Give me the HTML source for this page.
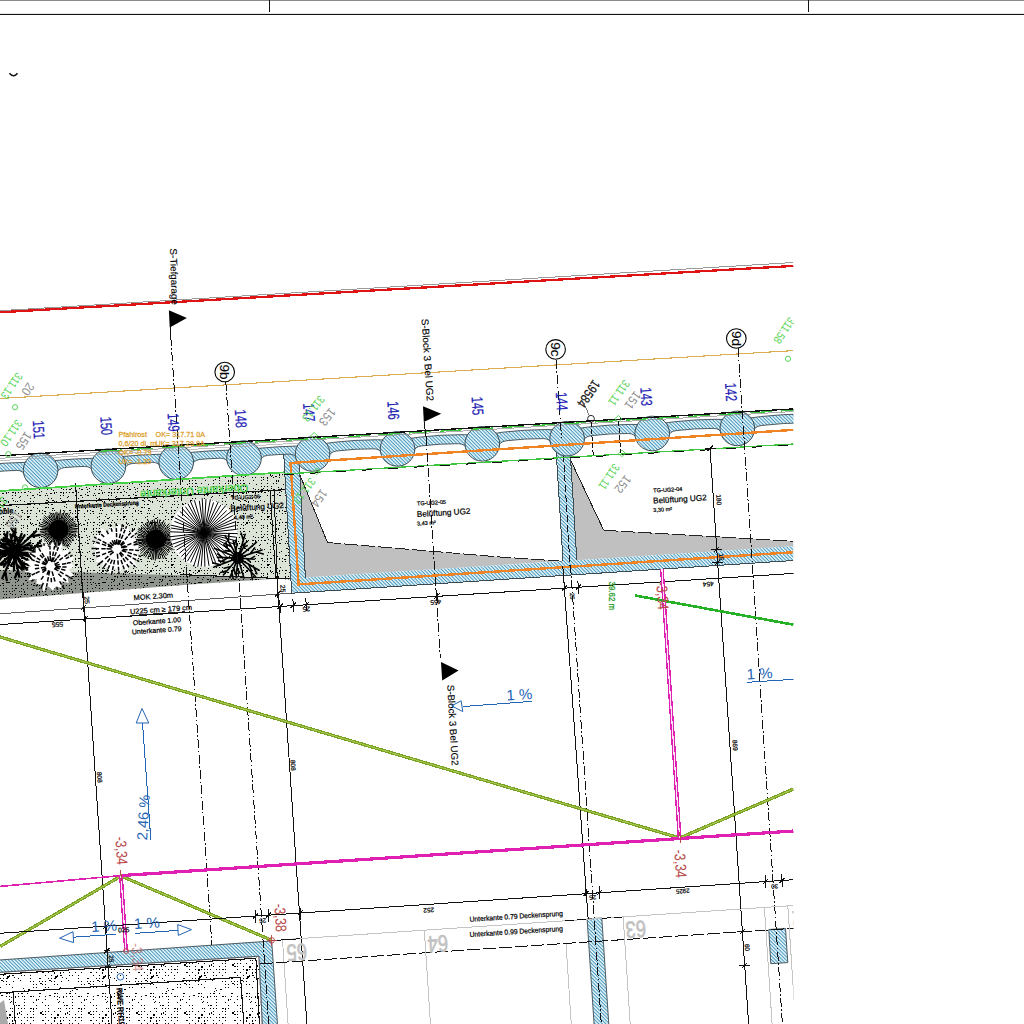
<!DOCTYPE html>
<html><head><meta charset="utf-8"><title>Plan</title>
<style>
html,body{margin:0;padding:0;background:#fff;}
body{width:1024px;height:1024px;overflow:hidden;position:relative;font-family:"Liberation Sans",sans-serif;}
svg{position:absolute;left:0;top:0;display:block;}
svg text{font-family:"Liberation Sans",sans-serif;}
</style></head><body>
<svg width="1024" height="1024" viewBox="0 0 1024 1024">
<defs>
<pattern id="h" width="2.5" height="2.5" patternUnits="userSpaceOnUse" patternTransform="rotate(45)"><rect width="2.5" height="2.5" fill="#eefafc"/><rect width="2.5" height="1.05" fill="#4496bd"/></pattern>
<pattern id="st1" width="48" height="48" patternUnits="userSpaceOnUse"><rect width="48" height="48" fill="#dae3d6"/><path d="M0 0h1v1h-1zM3 0h1v1h-1zM13 0h1v1h-1zM21 0h1v1h-1zM23 47h1v1h-1zM27 0h1v1h-1zM36 0h1v2h-1zM38 0h1v2h-1zM45 0h1v2h-1zM0 3h1v1h-1zM3 3h2v1h-2zM9 3h1v1h-1zM16 4h1v1h-1zM21 3h1v1h-1zM27 3h1v1h-1zM33 3h1v1h-1zM36 3h1v1h-1zM43 4h1v1h-1zM45 3h1v1h-1zM0 6h1v1h-1zM3 6h1v1h-1zM5 6h1v1h-1zM21 6h1v1h-1zM24 6h1v1h-1zM27 6h1v1h-1zM31 6h1v1h-1zM38 7h1v1h-1zM45 6h1v1h-1zM47 9h1v1h-1zM3 9h1v1h-1zM5 10h1v1h-1zM13 8h1v1h-1zM15 9h1v1h-1zM18 9h1v1h-1zM21 9h2v1h-2zM23 8h1v1h-1zM27 9h1v1h-1zM31 8h1v1h-1zM33 9h2v1h-2zM39 9h1v1h-1zM41 8h1v1h-1zM2 13h2v1h-2zM6 12h1v2h-1zM8 12h1v1h-1zM12 12h2v1h-2zM15 12h1v2h-1zM18 12h1v1h-1zM21 12h1v1h-1zM24 12h2v1h-2zM28 11h1v1h-1zM30 12h1v1h-1zM39 12h1v1h-1zM41 11h1v1h-1zM46 13h1v1h-1zM47 15h1v1h-1zM12 15h1v1h-1zM15 15h1v1h-1zM20 16h1v1h-1zM27 15h1v1h-1zM32 15h2v1h-2zM37 14h1v1h-1zM39 15h2v1h-2zM45 15h1v1h-1zM0 18h1v1h-1zM3 18h1v1h-1zM12 18h1v1h-1zM19 17h1v1h-1zM30 18h1v1h-1zM34 17h1v1h-1zM0 21h1v1h-1zM4 20h2v1h-2zM6 21h1v1h-1zM8 21h1v2h-1zM13 20h1v1h-1zM15 21h1v1h-1zM17 21h1v1h-1zM20 20h1v1h-1zM24 21h1v1h-1zM30 21h1v1h-1zM33 21h1v1h-1zM46 20h2v1h-2zM0 24h1v1h-1zM3 24h2v1h-2zM18 24h1v1h-1zM28 24h1v1h-1zM30 24h1v1h-1zM34 24h1v1h-1zM39 24h1v1h-1zM41 23h1v1h-1zM0 27h1v1h-1zM4 28h2v1h-2zM16 26h1v1h-1zM18 27h1v1h-1zM27 27h1v1h-1zM33 27h1v1h-1zM37 28h1v1h-1zM45 27h2v1h-2zM4 30h1v1h-1zM6 30h1v1h-1zM15 30h1v1h-1zM21 30h2v1h-2zM27 30h1v2h-1zM30 30h2v1h-2zM39 30h1v2h-1zM42 30h1v1h-1zM44 31h2v1h-2zM3 33h1v1h-1zM5 33h1v1h-1zM10 34h1v1h-1zM15 33h1v1h-1zM18 33h1v1h-1zM22 32h1v1h-1zM24 33h1v1h-1zM27 33h1v1h-1zM30 33h1v1h-1zM36 33h1v1h-1zM42 33h1v1h-1zM45 33h1v1h-1zM1 37h1v1h-1zM3 36h1v1h-1zM9 36h1v1h-1zM13 37h1v1h-1zM21 36h1v1h-1zM27 36h2v2h-2zM29 36h1v1h-1zM36 36h1v1h-1zM3 39h1v1h-1zM8 40h1v1h-1zM11 38h2v1h-2zM16 40h1v1h-1zM21 39h1v1h-1zM24 39h1v1h-1zM27 39h1v1h-1zM30 39h1v1h-1zM37 40h1v1h-1zM40 39h1v1h-1zM3 42h1v1h-1zM6 42h2v2h-2zM9 42h1v1h-1zM12 42h1v1h-1zM15 42h1v1h-1zM18 42h1v1h-1zM30 42h1v2h-1zM32 43h1v1h-1zM39 42h1v2h-1zM42 42h1v1h-1zM45 42h2v1h-2zM1 44h1v1h-1zM3 45h1v1h-1zM5 44h1v1h-1zM12 45h1v1h-1zM15 45h1v1h-1zM21 45h1v1h-1zM23 45h1v1h-1zM27 45h1v2h-1zM31 44h1v1h-1zM33 45h1v1h-1zM35 44h2v1h-2zM39 45h1v1h-1zM45 45h1v1h-1z" fill="#000" shape-rendering="crispEdges"/></pattern>
<pattern id="st2" width="48" height="48" patternUnits="userSpaceOnUse"><rect width="48" height="48" fill="#8f948c"/><path d="M5 1h2v1h-2zM11 1h1v1h-1zM18 0h2v1h-2zM21 0h1v2h-1zM24 0h2v1h-2zM27 0h2v1h-2zM30 0h1v1h-1zM32 0h1v1h-1zM36 0h1v1h-1zM39 0h1v1h-1zM42 0h2v1h-2zM45 0h1v1h-1zM3 3h1v1h-1zM10 3h1v1h-1zM15 3h2v1h-2zM18 3h1v2h-1zM25 4h2v1h-2zM30 3h1v1h-1zM33 3h2v1h-2zM36 3h1v1h-1zM39 3h1v1h-1zM42 3h2v1h-2zM47 7h1v1h-1zM2 7h2v1h-2zM6 6h2v1h-2zM8 6h2v1h-2zM15 6h1v1h-1zM17 5h1v1h-1zM23 7h1v1h-1zM27 6h1v1h-1zM34 7h1v1h-1zM39 6h1v1h-1zM42 6h1v1h-1zM45 6h1v1h-1zM0 9h1v1h-1zM3 9h1v1h-1zM12 9h1v1h-1zM15 9h1v1h-1zM18 9h1v1h-1zM21 9h1v1h-1zM23 8h1v1h-1zM27 9h1v1h-1zM31 8h1v1h-1zM33 9h2v1h-2zM39 9h1v1h-1zM43 8h1v1h-1zM47 11h1v1h-1zM3 12h1v1h-1zM6 12h1v1h-1zM12 12h1v1h-1zM15 12h2v1h-2zM21 12h1v1h-1zM23 13h1v1h-1zM27 12h1v1h-1zM32 13h2v1h-2zM39 12h1v1h-1zM44 12h1v1h-1zM3 15h1v1h-1zM6 15h1v1h-1zM9 15h1v1h-1zM12 15h1v1h-1zM14 14h1v1h-1zM19 15h1v1h-1zM21 15h1v1h-1zM24 15h1v2h-1zM37 16h1v1h-1zM39 15h1v2h-1zM42 15h1v1h-1zM45 15h1v1h-1zM47 19h2v2h-2zM4 18h1v1h-1zM6 18h1v1h-1zM10 17h1v1h-1zM12 18h1v1h-1zM15 18h1v1h-1zM21 18h1v1h-1zM24 18h2v1h-2zM27 18h1v1h-1zM31 19h1v1h-1zM33 18h1v1h-1zM36 18h1v2h-1zM39 18h1v1h-1zM43 19h1v2h-1zM45 18h2v1h-2zM47 20h1v1h-1zM3 21h1v1h-1zM6 21h1v1h-1zM9 21h1v1h-1zM15 21h1v1h-1zM18 21h1v1h-1zM20 20h1v1h-1zM27 21h1v1h-1zM30 21h1v2h-1zM33 21h1v1h-1zM40 21h1v1h-1zM1 24h1v1h-1zM4 23h1v1h-1zM6 24h1v1h-1zM12 24h1v1h-1zM15 24h1v1h-1zM21 24h1v1h-1zM24 24h2v1h-2zM27 24h1v1h-1zM30 24h1v1h-1zM32 24h1v1h-1zM35 23h1v1h-1zM45 24h1v1h-1zM0 27h2v1h-2zM4 28h1v1h-1zM5 27h1v1h-1zM9 27h1v1h-1zM15 27h1v1h-1zM18 27h1v1h-1zM27 27h1v2h-1zM0 30h1v1h-1zM3 30h1v1h-1zM9 30h2v1h-2zM12 30h1v1h-1zM15 30h1v1h-1zM27 30h1v1h-1zM32 30h1v1h-1zM38 30h1v1h-1zM43 29h1v1h-1zM45 30h1v1h-1zM0 33h1v1h-1zM3 33h1v1h-1zM9 33h2v1h-2zM12 33h1v1h-1zM15 33h1v1h-1zM18 33h1v1h-1zM24 33h1v1h-1zM36 33h1v1h-1zM38 32h1v2h-1zM42 33h1v1h-1zM45 33h1v1h-1zM0 36h1v1h-1zM3 36h1v1h-1zM10 35h1v1h-1zM11 35h1v1h-1zM21 36h2v1h-2zM24 36h1v1h-1zM26 35h1v1h-1zM31 37h1v1h-1zM36 36h2v1h-2zM39 36h1v1h-1zM41 36h1v1h-1zM44 37h1v1h-1zM0 39h1v1h-1zM3 39h1v1h-1zM5 38h1v1h-1zM9 39h1v1h-1zM17 38h1v1h-1zM20 38h1v1h-1zM23 40h2v1h-2zM26 38h2v1h-2zM33 39h1v1h-1zM36 39h1v1h-1zM39 39h1v1h-1zM45 39h1v1h-1zM0 42h1v1h-1zM3 42h1v1h-1zM9 42h1v1h-1zM13 43h1v1h-1zM15 42h1v1h-1zM18 42h1v1h-1zM21 42h2v1h-2zM24 42h1v1h-1zM29 43h2v1h-2zM32 41h2v2h-2zM36 42h1v1h-1zM39 42h1v1h-1zM42 42h1v1h-1zM44 43h1v1h-1zM3 45h1v1h-1zM6 45h1v1h-1zM9 45h2v1h-2zM15 45h1v2h-1zM18 45h1v1h-1zM21 45h1v1h-1zM25 45h1v1h-1zM27 45h1v2h-1zM29 46h1v1h-1zM36 45h1v1h-1zM39 45h1v1h-1zM42 45h1v1h-1z" fill="#000" shape-rendering="crispEdges"/></pattern>
<pattern id="st3" width="48" height="48" patternUnits="userSpaceOnUse"><rect width="48" height="48" fill="#ffffff"/><path d="M0 0h1v1h-1zM10 0h1v1h-1zM12 0h1v1h-1zM18 0h1v1h-1zM21 0h1v1h-1zM24 0h1v1h-1zM30 0h2v1h-2zM33 0h1v2h-1zM36 0h1v1h-1zM0 3h1v1h-1zM6 3h1v1h-1zM12 3h1v1h-1zM19 4h1v2h-1zM21 3h1v1h-1zM30 3h1v1h-1zM33 3h1v1h-1zM40 4h2v2h-2zM42 3h1v1h-1zM45 3h1v1h-1zM3 6h1v1h-1zM9 6h2v2h-2zM17 5h1v2h-1zM21 6h1v1h-1zM27 6h1v1h-1zM33 6h1v1h-1zM42 6h2v1h-2zM45 6h1v1h-1zM3 9h1v1h-1zM6 9h2v2h-2zM9 9h1v1h-1zM12 9h1v1h-1zM15 9h1v1h-1zM18 9h1v1h-1zM24 9h1v1h-1zM27 9h1v1h-1zM30 9h2v1h-2zM33 9h1v1h-1zM45 9h1v1h-1zM0 12h1v1h-1zM6 12h1v2h-1zM12 12h1v2h-1zM15 12h1v1h-1zM21 12h1v1h-1zM27 12h1v1h-1zM33 12h1v1h-1zM42 12h2v1h-2zM3 15h1v1h-1zM7 16h2v2h-2zM9 15h1v2h-1zM12 15h2v1h-2zM21 15h1v1h-1zM24 15h1v1h-1zM30 15h1v1h-1zM45 15h1v1h-1zM0 18h1v1h-1zM3 18h1v1h-1zM6 18h2v1h-2zM14 17h1v1h-1zM18 18h1v1h-1zM30 18h1v1h-1zM39 18h2v1h-2zM1 20h2v1h-2zM3 21h1v1h-1zM6 21h1v1h-1zM13 21h1v1h-1zM20 20h1v1h-1zM30 21h1v1h-1zM33 21h1v1h-1zM39 21h1v1h-1zM42 21h1v1h-1zM45 21h1v1h-1zM6 24h1v1h-1zM9 24h1v1h-1zM33 24h1v1h-1zM36 24h1v1h-1zM40 23h2v1h-2zM42 24h1v1h-1zM45 24h1v1h-1zM0 27h1v1h-1zM12 27h1v1h-1zM23 28h1v1h-1zM33 27h1v1h-1zM36 27h1v1h-1zM45 27h1v1h-1zM22 31h1v1h-1zM24 30h1v1h-1zM28 29h2v1h-2zM6 33h2v1h-2zM9 33h1v1h-1zM18 33h1v1h-1zM21 33h2v1h-2zM27 33h1v1h-1zM39 33h2v1h-2zM1 35h2v1h-2zM6 36h1v1h-1zM9 36h1v1h-1zM11 37h1v1h-1zM15 36h1v2h-1zM18 36h1v1h-1zM22 36h1v1h-1zM24 36h1v1h-1zM30 36h2v1h-2zM33 36h1v1h-1zM39 36h1v1h-1zM45 36h1v1h-1zM9 39h1v1h-1zM24 39h1v1h-1zM36 39h1v2h-1zM38 39h1v1h-1zM45 39h1v1h-1zM10 42h1v1h-1zM11 41h1v1h-1zM15 42h1v1h-1zM24 42h1v1h-1zM33 42h1v1h-1zM42 42h1v1h-1zM0 45h1v1h-1zM16 45h1v1h-1zM18 45h2v1h-2zM24 45h1v1h-1zM36 45h1v1h-1zM45 45h1v1h-1z" fill="#000" shape-rendering="crispEdges"/></pattern>
<clipPath id="clip"><rect x="0" y="15" width="793.5" height="1010"/></clipPath>
</defs>
<rect x="0" y="0" width="1024" height="1" fill="#8a8a8a"/>
<rect x="0" y="13.9" width="1024" height="1.1" fill="#111"/>
<rect x="269" y="0" width="1" height="12" fill="#111"/>
<rect x="808" y="0" width="1" height="12" fill="#111"/>
<path d="M9.5 73.3 q4 5 8 0" stroke="#111" stroke-width="1.6" fill="none"/>
<g clip-path="url(#clip)">
<polygon points="0.0,491.0 284.5,472.3 291.0,579.5 0.0,570.0" fill="url(#st1)" stroke="none" stroke-width="1" />
<polygon points="0.0,570.0 180.0,575.2 272.0,579.0 180.0,585.3 0.0,599.4" fill="url(#st2)" stroke="none" stroke-width="1" />
<path d="M14.0 552.0L38.8 553.8M32.6 553.3L39.0 549.6M14.0 552.0L37.2 558.9M25.6 555.5L32.5 553.3M31.4 557.2L35.9 562.8M14.0 552.0L35.0 564.8M29.7 561.6L32.8 568.3M14.0 552.0L29.5 573.1M21.8 562.5L29.2 565.1M25.6 567.8L33.0 570.4M14.0 552.0L23.7 569.2M18.8 560.6L24.2 563.2M14.0 552.0L19.3 576.7M16.6 564.4L22.1 569.6M18.0 570.6L15.1 577.6M14.0 552.0L14.0 570.2M14.0 561.1L10.9 565.6M14.0 552.0L2.3 578.3M5.2 571.7L6.8 580.2M14.0 552.0L4.1 566.4M9.0 559.2L9.0 564.4M6.6 562.8L1.7 564.7M14.0 552.0L-8.8 572.2M-3.1 567.1L-5.3 576.0M14.0 552.0L-2.5 558.6M5.7 555.3L0.5 554.1M1.6 556.9L-1.4 561.3M14.0 552.0L-6.6 554.9M3.7 553.4L-1.9 550.7M-1.5 554.2L-7.1 551.4M14.0 552.0L-4.6 549.8M4.7 550.9L-0.3 553.5M0.1 550.3L-4.1 546.6M14.0 552.0L-4.1 544.6M5.0 548.3L1.7 543.4M0.4 546.5L-5.3 547.7M14.0 552.0L-4.6 539.5M4.7 545.8L-2.0 545.8M0.0 542.7L-2.5 536.4M14.0 552.0L3.8 538.0M8.9 545.0L4.0 543.3M6.4 541.5L1.5 539.7M14.0 552.0L4.3 533.8M6.7 538.3L7.4 532.2M14.0 552.0L10.4 534.3M12.2 543.1L8.3 539.4M11.3 538.7L13.4 533.7M14.0 552.0L15.4 528.7M15.0 534.5L11.4 528.5M14.0 552.0L21.6 533.9M17.8 543.0L16.6 537.2M14.0 552.0L24.5 535.3M14.0 552.0L36.1 531.2M30.6 536.4L39.5 535.0M14.0 552.0L30.2 542.8M22.1 547.4L27.6 547.9M26.1 545.1L31.7 545.6M14.0 552.0L41.8 545.7M27.9 548.9L35.9 552.0M34.9 547.3L40.7 541.0" stroke="#000" stroke-width="2.3" fill="none" stroke-linecap="round"/>
<circle cx="14" cy="552" r="6.8" fill="#000"/>
<path d="M58.6 529.8L77.2 529.9M58.6 529.8L77.6 532.0M58.6 529.8L75.8 533.3M58.6 529.8L77.2 536.0M58.6 529.8L75.5 536.8M58.6 529.8L73.5 537.9M58.6 529.8L74.1 540.4M58.6 529.8L71.5 541.1M58.6 529.8L71.6 542.9M58.6 529.8L70.8 545.0M58.6 529.8L69.6 546.9M58.6 529.8L67.8 547.8M58.6 529.8L65.3 546.6M58.6 529.8L63.4 546.0M58.6 529.8L61.6 546.6M58.6 529.8L60.3 547.7M58.6 529.8L58.5 546.9M58.6 529.8L56.6 547.9M58.6 529.8L54.6 549.7M58.6 529.8L53.2 546.2M58.6 529.8L51.2 546.3M58.6 529.8L49.8 546.1M58.6 529.8L47.5 546.4M58.6 529.8L47.5 542.6M58.6 529.8L46.5 541.5M58.6 529.8L44.3 541.1M58.6 529.8L44.4 539.3M58.6 529.8L43.4 537.9M58.6 529.8L41.6 536.7M58.6 529.8L39.2 535.5M58.6 529.8L40.4 533.0M58.6 529.8L39.9 531.4M58.6 529.8L39.9 529.5M58.6 529.8L41.6 528.0M58.6 529.8L38.7 525.8M58.6 529.8L39.8 524.0M58.6 529.8L41.6 522.3M58.6 529.8L42.8 520.8M58.6 529.8L42.8 519.1M58.6 529.8L43.6 517.1M58.6 529.8L44.4 515.3M58.6 529.8L47.6 516.0M58.6 529.8L48.9 514.9M58.6 529.8L49.6 512.2M58.6 529.8L52.2 513.4M58.6 529.8L53.6 512.9M58.6 529.8L55.6 512.5M58.6 529.8L56.9 511.8M58.6 529.8L59.0 512.8M58.6 529.8L60.6 509.5M58.6 529.8L62.4 513.0M58.6 529.8L64.7 510.5M58.6 529.8L66.0 513.1M58.6 529.8L68.0 512.9M58.6 529.8L70.0 513.5M58.6 529.8L70.3 516.1M58.6 529.8L71.5 517.5M58.6 529.8L73.7 517.8M58.6 529.8L73.7 519.9M58.6 529.8L75.4 521.2M58.6 529.8L75.6 523.1M58.6 529.8L77.4 524.2M58.6 529.8L77.9 526.1M58.6 529.8L79.0 528.3" stroke="#000" stroke-width="1.0" fill="none"/>
<circle cx="58.6" cy="529.8" r="9.8" fill="#000"/>
<polygon points="74.2,566.4 68.8,569.8 74.0,575.5 67.6,577.0 68.7,583.0 61.7,581.2 61.2,587.9 56.1,586.2 52.7,590.5 48.6,586.6 43.4,591.5 41.7,584.1 36.4,585.0 36.5,579.2 28.3,580.2 32.0,573.6 24.2,571.3 30.8,566.4 24.0,561.4 33.0,559.6 28.0,552.5 35.5,552.8 36.0,547.2 41.8,549.0 43.2,540.8 48.7,547.1 52.8,541.6 55.7,548.2 62.3,542.6 61.6,551.7 69.2,549.4 67.6,555.8 73.9,557.3 70.7,562.6" fill="#fff" stroke="none" stroke-width="1" />
<path d="M56.0 566.6L60.9 566.8M62.3 566.9L66.6 567.1M55.1 567.6L59.8 568.8M61.2 569.2L65.4 570.3M54.2 568.5L58.4 570.9M59.8 571.7L63.6 573.8M65.4 574.9L68.7 576.7M70.3 577.6L72.6 578.9M58.3 573.7L61.5 576.7M63.3 578.4L66.1 580.9M59.6 581.4L61.6 584.6M62.3 585.7L63.7 588.0M52.0 571.4L53.4 576.0M53.8 577.3L55.0 581.5M56.8 587.2L57.5 589.8M51.2 578.0L51.4 582.3M49.7 570.7L48.7 575.5M48.4 577.2L47.5 581.5M47.2 583.2L46.5 586.9M46.4 587.5L45.8 590.1M48.8 570.3L46.9 574.8M43.4 582.9L41.9 586.3M41.9 586.2L40.9 588.7M43.5 576.1L41.0 579.6M37.8 584.1L36.2 586.3M46.3 569.7L42.4 572.7M33.5 579.7L31.4 581.4M46.4 568.3L42.0 570.3M39.6 571.4L35.7 573.2M35.2 573.4L31.8 575.0M30.7 575.6L28.2 576.7M45.7 567.1L40.9 567.9M39.2 568.2L34.9 568.8M28.3 569.8L25.7 570.3M39.0 565.4L34.7 565.1M28.4 564.5L25.7 564.3M46.3 564.9L41.7 563.2M39.8 562.5L35.7 561.1M34.7 560.7L31.2 559.4M46.7 564.1L42.6 561.5M40.4 560.1L36.8 557.8M35.5 557.0L32.3 555.0M32.2 554.9L29.9 553.5M47.6 563.2L44.3 559.6M42.9 558.1L40.0 554.9M35.4 549.8L33.6 547.8M47.6 562.0L45.0 557.9M44.2 556.8L41.9 553.2M40.8 551.6L38.7 548.4M38.2 547.6L36.7 545.4M48.9 561.1L47.6 556.4M44.4 545.8L43.7 543.2M50.3 561.0L50.2 556.1M50.2 555.5L50.1 551.2M50.0 549.6L49.9 545.8M49.9 544.6L49.8 541.9M51.4 562.1L52.4 557.4M52.7 555.8L53.5 551.6M53.9 549.6L54.7 545.9M54.9 544.9L55.4 542.3M52.4 561.7L54.2 557.2M54.6 556.3L56.3 552.3M57.0 550.6L58.4 547.1M59.1 545.4L60.1 542.9M53.8 562.3L56.8 558.5M57.3 558.0L60.0 554.6M59.4 560.1L62.9 557.6M64.4 556.6L67.5 554.4M68.3 553.8L70.5 552.2M54.4 564.4L58.8 562.2M65.7 558.7L69.1 557.0M70.1 556.5L72.5 555.2M54.9 565.6L59.7 564.6M62.0 564.2L66.3 563.4M66.9 563.2L70.7 562.5" stroke="#000" stroke-width="1.5" fill="none"/>
<polygon points="144.5,549.0 137.8,552.9 139.2,557.6 133.5,559.2 137.2,567.4 128.8,564.6 127.9,570.9 122.4,568.1 119.2,573.2 115.3,567.8 110.0,573.7 108.1,567.0 102.3,568.5 102.9,561.8 95.6,562.3 98.1,556.3 93.3,553.4 98.0,549.0 92.9,544.5 98.4,541.8 95.2,535.5 101.6,535.0 101.2,528.1 108.7,532.2 110.3,525.3 115.2,529.6 119.3,524.1 122.5,529.6 128.3,526.4 129.1,532.9 136.9,530.9 133.1,539.0 140.6,539.8 137.1,545.2" fill="#fff" stroke="none" stroke-width="1" />
<path d="M122.6 549.4L127.5 549.7M129.1 549.8L133.5 550.1M135.2 550.2L139.0 550.5M121.6 550.5L126.3 552.0M127.7 552.4L131.9 553.7M133.5 554.2L137.2 555.4M138.5 555.8L141.1 556.6M127.3 554.9L131.2 557.0M132.6 557.9L136.0 559.8M136.8 560.2L139.2 561.6M120.1 552.0L123.6 555.5M125.2 557.0L128.3 560.1M129.8 561.5L132.6 564.2M133.4 565.1L135.4 567.0M119.5 552.9L122.2 557.0M123.0 558.2L125.4 561.8M126.8 564.1L128.9 567.3M121.0 560.1L122.5 564.3M122.9 565.5L124.2 569.1M124.8 570.7L125.7 573.3M117.4 553.7L117.8 558.7M117.9 560.4L118.2 564.8M118.4 566.7L118.7 570.6M118.7 571.3L119.0 574.0M114.6 560.0L113.7 564.3M113.3 566.2L112.5 570.0M112.3 570.8L111.8 573.5M112.2 559.7L110.4 563.7M109.6 565.3L108.1 568.8M107.9 569.3L106.7 571.8M110.0 558.5L107.4 562.0M106.4 563.4L104.2 566.5M104.1 566.6L102.4 568.9M113.7 551.8L109.9 554.9M108.4 556.2L105.0 559.0M103.0 560.6L100.1 563.1M99.9 563.2L97.8 564.9M112.6 550.7L107.9 552.5M106.2 553.1L102.1 554.7M100.1 555.5L96.5 556.8M99.8 552.3L96.0 553.0M95.0 553.2L92.3 553.7M111.6 548.9L106.6 548.8M105.7 548.8L101.3 548.7M99.0 548.7L95.1 548.6M94.2 548.6L91.5 548.5M112.5 547.6L107.8 546.0M106.1 545.5L101.9 544.1M99.8 543.5L96.2 542.3M95.1 541.9L92.5 541.1M112.1 546.4L107.7 544.1M106.5 543.5L102.6 541.4M101.1 540.6L97.7 538.8M96.6 538.3L94.1 537.0M113.6 545.8L109.9 542.4M104.2 537.0L101.4 534.4M100.1 533.2L98.1 531.4M114.5 544.7L112.1 540.4M108.4 534.1L106.5 530.7M115.8 544.8L114.5 540.0M112.2 531.8L111.1 528.1M110.8 526.9L110.0 524.3M116.8 544.2L116.7 539.3M116.6 537.3L116.5 532.9M116.5 532.0L116.3 528.1M116.3 526.0L116.2 523.2M117.9 544.8L119.0 539.9M119.4 538.0L120.4 533.7M120.9 531.4L121.8 527.6M121.9 526.9L122.5 524.2M118.8 544.6L120.8 540.1M121.3 538.9L123.0 534.8M123.6 533.4L125.1 529.8M125.6 528.7L126.6 526.2M120.4 545.0L123.6 541.2M124.8 539.8L127.7 536.4M128.3 535.6L130.8 532.7M131.8 531.5L133.6 529.4M120.8 545.9L124.7 542.7M130.8 537.8L133.7 535.3M134.7 534.5L136.9 532.8M121.0 547.5L125.6 545.7M127.3 545.1L131.4 543.5M133.5 542.7L137.1 541.3M137.9 541.0L140.5 540.1M122.4 547.7L127.2 546.5M133.6 544.9L137.4 544.0M139.1 543.6L141.8 542.9" stroke="#000" stroke-width="1.5" fill="none"/>
<path d="M155.6 539.4L174.7 539.6M155.6 539.4L174.2 541.5M155.6 539.4L174.6 543.7M155.6 539.4L173.5 545.2M155.6 539.4L175.1 547.6M155.6 539.4L173.5 549.6M155.6 539.4L171.8 550.2M155.6 539.4L169.9 551.7M155.6 539.4L169.0 552.9M155.6 539.4L168.0 555.0M155.6 539.4L166.3 555.8M155.6 539.4L165.3 558.1M155.6 539.4L163.5 559.0M155.6 539.4L160.9 558.7M155.6 539.4L158.9 558.9M155.6 539.4L157.0 558.9M155.6 539.4L155.3 560.7M155.6 539.4L153.2 559.9M155.6 539.4L151.5 560.0M155.6 539.4L150.0 557.0M155.6 539.4L147.6 558.5M155.6 539.4L145.3 557.4M155.6 539.4L143.7 556.3M155.6 539.4L142.1 555.8M155.6 539.4L140.4 553.9M155.6 539.4L140.3 551.3M155.6 539.4L139.5 550.0M155.6 539.4L138.4 548.0M155.6 539.4L138.6 546.0M155.6 539.4L135.6 544.9M155.6 539.4L135.5 543.3M155.6 539.4L136.0 541.0M155.6 539.4L135.8 539.4M155.6 539.4L137.3 537.5M155.6 539.4L137.8 535.4M155.6 539.4L137.4 533.8M155.6 539.4L137.6 531.5M155.6 539.4L137.9 529.4M155.6 539.4L138.6 528.0M155.6 539.4L140.7 526.7M155.6 539.4L142.6 526.4M155.6 539.4L142.8 523.7M155.6 539.4L145.2 523.1M155.6 539.4L146.6 522.4M155.6 539.4L147.7 519.6M155.6 539.4L150.6 521.2M155.6 539.4L152.0 520.0M155.6 539.4L154.2 519.2M155.6 539.4L155.6 521.5M155.6 539.4L157.7 519.3M155.6 539.4L160.0 519.4M155.6 539.4L161.3 522.2M155.6 539.4L163.9 520.1M155.6 539.4L165.1 522.4M155.6 539.4L165.8 524.5M155.6 539.4L169.3 523.5M155.6 539.4L170.4 525.3M155.6 539.4L170.0 528.2M155.6 539.4L173.5 527.9M155.6 539.4L174.6 529.8M155.6 539.4L174.0 532.2M155.6 539.4L173.2 534.1M155.6 539.4L173.3 536.1M155.6 539.4L174.2 537.7" stroke="#000" stroke-width="1.0" fill="none"/>
<circle cx="155.6" cy="539.4" r="9.7" fill="#000"/>
<circle cx="204" cy="533" r="33.9" fill="#fff"/>
<path d="M204.0 533.0L237.7 533.6M204.0 533.0L236.6 537.3M204.0 533.0L236.7 540.9M204.0 533.0L235.6 544.7M204.0 533.0L232.7 547.6M204.0 533.0L231.6 551.2M204.0 533.0L227.9 554.1M204.0 533.0L228.0 558.5M204.0 533.0L224.0 560.7M204.0 533.0L220.8 563.0M204.0 533.0L215.7 562.8M204.0 533.0L213.0 563.7M204.0 533.0L209.0 565.8M204.0 533.0L204.9 566.7M204.0 533.0L201.2 566.5M204.0 533.0L197.7 566.7M204.0 533.0L193.7 566.4M204.0 533.0L190.6 562.5M204.0 533.0L187.5 561.1M204.0 533.0L183.6 559.5M204.0 533.0L181.4 556.6M204.0 533.0L179.4 553.2M204.0 533.0L176.5 550.1M204.0 533.0L174.6 547.1M204.0 533.0L172.3 544.2M204.0 533.0L171.3 540.1M204.0 533.0L169.4 536.8M204.0 533.0L170.0 531.8M204.0 533.0L170.9 528.0M204.0 533.0L171.1 525.2M204.0 533.0L174.3 521.3M204.0 533.0L174.8 517.7M204.0 533.0L177.6 515.2M204.0 533.0L179.8 511.4M204.0 533.0L182.0 508.2M204.0 533.0L185.4 506.6M204.0 533.0L187.9 503.7M204.0 533.0L190.3 501.1M204.0 533.0L194.4 500.3M204.0 533.0L199.3 500.7M204.0 533.0L202.2 498.3M204.0 533.0L206.0 499.2M204.0 533.0L210.4 499.4M204.0 533.0L213.6 502.4M204.0 533.0L218.3 501.8M204.0 533.0L220.9 504.8M204.0 533.0L225.5 505.7M204.0 533.0L226.7 510.5M204.0 533.0L231.0 511.6M204.0 533.0L232.7 515.4M204.0 533.0L234.9 518.4M204.0 533.0L235.0 521.9M204.0 533.0L236.5 525.3M204.0 533.0L236.7 529.3" stroke="#000" stroke-width="1.0" fill="none"/>
<circle cx="204" cy="533" r="3.5" fill="#000"/>
<path d="M238.0 558.0L254.4 559.2M246.2 558.6L250.1 561.7M250.3 558.9L254.6 556.4M238.0 558.0L259.1 570.3M248.5 564.2L251.7 570.8M253.8 567.3L256.9 573.9M238.0 558.0L255.6 576.7M251.2 572.1L252.4 579.7M238.0 558.0L244.0 577.9M238.0 558.0L236.1 577.7M237.0 567.9L239.9 573.1M238.0 558.0L229.9 577.6M233.9 567.8L235.2 574.0M231.9 572.7L233.2 578.9M238.0 558.0L223.4 574.9M230.7 566.5L224.2 568.2M227.0 570.7L220.6 572.4M238.0 558.0L214.1 567.0M226.1 562.5L218.6 560.6M220.1 564.7L212.7 562.9M238.0 558.0L217.4 557.4M227.7 557.7L222.5 561.0M222.5 557.5L217.5 553.9M238.0 558.0L214.4 548.2M238.0 558.0L223.8 544.9M230.9 551.4L225.2 550.6M227.4 548.1L226.1 542.5M238.0 558.0L225.1 535.6M231.6 546.8L224.6 543.4M228.4 541.2L229.0 533.5M238.0 558.0L233.1 540.9M235.6 549.4L237.3 544.4M234.3 545.1L236.0 540.1M238.0 558.0L245.1 534.3M241.6 546.1L247.3 541.5M243.3 540.2L241.1 533.1M238.0 558.0L244.9 544.4M243.2 547.8L247.2 545.6M238.0 558.0L256.5 542.2M238.0 558.0L262.0 549.9M250.0 554.0L254.6 547.9M256.0 552.0L263.3 554.0" stroke="#000" stroke-width="1.6" fill="none" stroke-linecap="round"/>
<circle cx="238" cy="558" r="5.9" fill="#000"/>
<line x1="0.0" y1="505.6" x2="285.0" y2="489.7" stroke="#111" stroke-width="1.2" shape-rendering="crispEdges" />
<line x1="75.5" y1="483.0" x2="83.0" y2="598.0" stroke="#111" stroke-width="1.1" shape-rendering="crispEdges" />
<line x1="186.4" y1="567.0" x2="187.0" y2="575.5" stroke="#111" stroke-width="1" shape-rendering="crispEdges" />
<line x1="180.0" y1="574.6" x2="290.0" y2="578.9" stroke="#111" stroke-width="1.1" shape-rendering="crispEdges" />
<line x1="270.0" y1="490.0" x2="276.0" y2="579.0" stroke="#111" stroke-width="1" shape-rendering="crispEdges" />
<line x1="274.0" y1="489.5" x2="277.3" y2="579.8" stroke="#111" stroke-width="1" shape-rendering="crispEdges" />
<polygon points="299.5,474.0 327.5,542.5 500.0,557.0 562.0,561.2 563.0,561.1 305.4,577.6" fill="#c0c0c0" stroke="none" stroke-width="1" />
<polyline points="299.5,474.0 327.5,542.5" fill="none" stroke="#222" stroke-width="1" shape-rendering="crispEdges" />
<polyline points="327.5,542.5 500.0,557.0 562.0,561.2" fill="none" stroke="#222" stroke-width="1" shape-rendering="crispEdges" stroke-dasharray="14 3"/>
<polygon points="571.0,461.0 603.7,530.3 793.5,541.3 793.5,546.3 576.5,560.2" fill="#c0c0c0" stroke="none" stroke-width="1" />
<polyline points="571.0,461.0 603.7,530.3" fill="none" stroke="#222" stroke-width="1" shape-rendering="crispEdges" />
<polyline points="603.7,530.3 793.5,541.3" fill="none" stroke="#222" stroke-width="1" shape-rendering="crispEdges" stroke-dasharray="14 3"/>
<polygon points="283.6,452.0 298.6,451.0 305.4,577.6 306.4,577.6 793.5,546.3 793.5,560.5 291.7,593.2" fill="url(#h)" stroke="none" stroke-width="1" />
<polyline points="283.6,452.0 291.7,593.2 793.5,560.5" fill="none" stroke="#3c4a50" stroke-width="1" shape-rendering="crispEdges" />
<polyline points="298.6,451.0 305.4,577.6" fill="none" stroke="#3c4a50" stroke-width="1" shape-rendering="crispEdges" />
<polygon points="556.2,452.0 570.2,452.0 576.8,561.2 563.0,562.1" fill="url(#h)" stroke="none" stroke-width="1" />
<line x1="556.2" y1="452.0" x2="563.0" y2="561.1" stroke="#3c4a50" stroke-width="1" shape-rendering="crispEdges" />
<line x1="570.2" y1="452.0" x2="576.8" y2="560.2" stroke="#3c4a50" stroke-width="1" shape-rendering="crispEdges" />
<line x1="563.5" y1="455.0" x2="570.0" y2="566.0" stroke="#111" stroke-width="1" shape-rendering="crispEdges" stroke-dasharray="7 3"/>
<path d="M-30.0 465.9 Q5.3 462.5 40.6 461.7 L40.6 476.3 L24.8 475.7 Q23.8 470.5 16.8 470.4 Q5.3 470.8 -6.2 471.8 Q-13.2 472.9 -14.2 478.1 L-30.0 480.5Z M40.6 461.7 Q74.5 458.4 108.4 457.6 L108.4 472.2 L92.6 471.7 Q91.6 466.5 84.6 466.4 Q74.5 466.7 64.4 467.6 Q57.4 468.7 56.4 473.9 L40.6 476.3Z M108.4 457.6 Q142.3 454.3 176.2 453.6 L176.2 468.2 L160.4 467.6 Q159.4 462.4 152.4 462.3 Q142.3 462.6 132.2 463.5 Q125.2 464.6 124.2 469.8 L108.4 472.2Z M176.2 453.6 Q210.1 450.2 244.0 449.5 L244.0 464.1 L228.2 463.5 Q227.2 458.3 220.2 458.2 Q210.1 458.5 200.0 459.4 Q193.0 460.5 192.0 465.7 L176.2 468.2Z M244.0 449.5 Q278.3 446.1 312.6 445.4 L312.6 460.0 L296.8 459.4 Q295.8 454.2 288.8 454.1 Q278.3 454.4 267.8 455.3 Q260.8 456.4 259.8 461.6 L244.0 464.1Z M312.6 445.4 Q355.1 438.0 397.5 440.3 L397.5 454.9 L381.7 454.3 Q380.7 448.9 373.7 448.8 Q355.1 448.7 336.4 451.0 Q329.4 452.1 328.4 457.5 L312.6 460.0Z M397.5 440.3 Q439.9 432.9 482.3 435.2 L482.3 449.8 L466.5 449.2 Q465.5 443.8 458.5 443.7 Q439.9 443.6 421.3 445.9 Q414.3 447.0 413.3 452.4 L397.5 454.9Z M482.3 435.2 Q524.7 427.8 567.1 430.1 L567.1 444.7 L551.3 444.1 Q550.3 438.7 543.3 438.6 Q524.7 438.5 506.1 440.8 Q499.1 441.9 498.1 447.3 L482.3 449.8Z M567.1 430.1 Q609.7 422.7 652.2 424.9 L652.2 439.5 L636.4 439.0 Q635.4 433.6 628.4 433.5 Q609.7 433.4 590.9 435.7 Q583.9 436.8 582.9 442.2 L567.1 444.7Z M652.2 424.9 Q694.8 417.6 737.3 419.8 L737.3 434.4 L721.5 433.9 Q720.5 428.5 713.5 428.4 Q694.8 428.3 676.0 430.6 Q669.0 431.7 668.0 437.1 L652.2 439.5Z M737.3 419.8 Q783.6 412.2 830.0 414.3 L830.0 428.9 L814.2 428.3 Q813.2 422.9 806.2 422.8 Q783.6 422.9 761.1 425.5 Q754.1 426.6 753.1 432.0 L737.3 434.4Z" fill="url(#h)" stroke="#3c4a50" stroke-width="0.9"/>
<circle cx="40.6" cy="470.3" r="17.3" fill="url(#h)" stroke="#3c4a50" stroke-width="1"/>
<circle cx="108.4" cy="466.2" r="17.3" fill="url(#h)" stroke="#3c4a50" stroke-width="1"/>
<circle cx="176.2" cy="462.2" r="17.3" fill="url(#h)" stroke="#3c4a50" stroke-width="1"/>
<circle cx="244.0" cy="458.1" r="17.3" fill="url(#h)" stroke="#3c4a50" stroke-width="1"/>
<circle cx="312.6" cy="454.0" r="17.3" fill="url(#h)" stroke="#3c4a50" stroke-width="1"/>
<circle cx="397.5" cy="448.9" r="17.3" fill="url(#h)" stroke="#3c4a50" stroke-width="1"/>
<circle cx="482.3" cy="443.8" r="17.3" fill="url(#h)" stroke="#3c4a50" stroke-width="1"/>
<circle cx="567.1" cy="438.7" r="17.3" fill="url(#h)" stroke="#3c4a50" stroke-width="1"/>
<circle cx="652.2" cy="433.5" r="17.3" fill="url(#h)" stroke="#3c4a50" stroke-width="1"/>
<circle cx="737.3" cy="428.4" r="17.3" fill="url(#h)" stroke="#3c4a50" stroke-width="1"/>
<polyline points="793.5,429.9 290.5,463.0 298.6,584.4 793.5,552.2" fill="none" stroke="#f08424" stroke-width="2.4" shape-rendering="crispEdges" stroke-linejoin="miter"/>
<polygon points="0.0,974.0 258.5,957.5 262.5,1024.0 0.0,1024.0" fill="url(#st3)" stroke="none" stroke-width="1" />
<polygon points="0.0,1003.0 4.0,1000.0 8.0,1024.0 0.0,1024.0" fill="#a9a9a9" stroke="none" stroke-width="1" />
<polyline points="0.0,974.3 255.9,958.3 259.4,1024.0" fill="none" stroke="#111" stroke-width="1.1" shape-rendering="crispEdges" />
<polyline points="0.0,993.0 13.2,992.0 240.6,977.3 243.8,1024.0" fill="none" stroke="#111" stroke-width="1.1" shape-rendering="crispEdges" />
<line x1="13.2" y1="992.0" x2="15.2" y2="1024.0" stroke="#111" stroke-width="1" shape-rendering="crispEdges" />
<polyline points="0.0,972.6 258.6,956.6 262.0,1024.0" fill="none" stroke="#e8c8c8" stroke-width="1" shape-rendering="crispEdges" />
<polygon points="-2.0,960.1 271.7,941.0 277.6,1026.0 262.4,1026.0 259.0,956.2 -2.0,972.4" fill="url(#h)" stroke="#3c4a50" stroke-width="0.9" />
<polygon points="587.1,918.9 601.8,918.0 608.9,1026.0 594.2,1026.0" fill="url(#h)" stroke="#3c4a50" stroke-width="0.9" />
<polygon points="768.8,929.5 785.5,928.4 787.8,962.6 770.8,963.7" fill="url(#h)" stroke="#3c4a50" stroke-width="0.9" />
<line x1="0.0" y1="310.7" x2="793.5" y2="262.5" stroke="#9a9a9a" stroke-width="1" shape-rendering="crispEdges" />
<line x1="0.0" y1="312.3" x2="793.5" y2="265.9" stroke="#e01414" stroke-width="2.3" shape-rendering="crispEdges" />
<line x1="0.0" y1="398.5" x2="793.5" y2="350.6" stroke="#dcae52" stroke-width="1.1" shape-rendering="crispEdges" />
<line x1="0.0" y1="455.8" x2="793.5" y2="408.9" stroke="#111" stroke-width="1.3" shape-rendering="crispEdges" />
<line x1="100.0" y1="451.3" x2="793.5" y2="410.2" stroke="#3fc43f" stroke-width="1.2" shape-rendering="crispEdges" stroke-dasharray="22 9"/>
<line x1="0.0" y1="458.3" x2="793.5" y2="411.5" stroke="#8a8a8a" stroke-width="0.7" shape-rendering="crispEdges" />
<line x1="0.0" y1="460.6" x2="300.0" y2="443.0" stroke="#9a9a9a" stroke-width="0.6" shape-rendering="crispEdges" />
<line x1="0.0" y1="491.0" x2="284.5" y2="472.3" stroke="#46d246" stroke-width="1.8" shape-rendering="crispEdges" />
<line x1="284.5" y1="474.0" x2="793.5" y2="444.0" stroke="#3fc43f" stroke-width="1.3" shape-rendering="crispEdges" />
<line x1="284.5" y1="474.8" x2="793.5" y2="444.8" stroke="#111" stroke-width="1.0" shape-rendering="crispEdges" stroke-dasharray="10 16"/>
<line x1="0.0" y1="613.8" x2="291.7" y2="593.2" stroke="#333" stroke-width="0.8" shape-rendering="crispEdges" />
<line x1="0.0" y1="624.5" x2="793.5" y2="573.4" stroke="#111" stroke-width="1" shape-rendering="crispEdges" />
<line x1="83.0" y1="592.0" x2="112.0" y2="1024.0" stroke="#111" stroke-width="1" shape-rendering="crispEdges" />
<line x1="277.1" y1="580.0" x2="306.9" y2="1024.0" stroke="#111" stroke-width="1" shape-rendering="crispEdges" />
<line x1="562.8" y1="566.0" x2="588.1" y2="918.6" stroke="#111" stroke-width="1" shape-rendering="crispEdges" />
<line x1="570.5" y1="565.0" x2="601.3" y2="1024.0" stroke="#111" stroke-width="1" shape-rendering="crispEdges" stroke-dasharray="9 2.5 1.5 2.5"/>
<line x1="710.0" y1="448.3" x2="748.6" y2="1024.0" stroke="#111" stroke-width="1" shape-rendering="crispEdges" />
<line x1="738.1" y1="348.4" x2="782.4" y2="1024.0" stroke="#111" stroke-width="1" shape-rendering="crispEdges" stroke-dasharray="9 2.5 1.5 2.5"/>
<line x1="170.8" y1="337.0" x2="211.9" y2="945.0" stroke="#111" stroke-width="1" shape-rendering="crispEdges" stroke-dasharray="9 2.5 1.5 2.5"/>
<line x1="170.0" y1="327.0" x2="170.8" y2="338.0" stroke="#111" stroke-width="1" shape-rendering="crispEdges" />
<line x1="225.8" y1="382.0" x2="268.6" y2="1024.0" stroke="#111" stroke-width="1" shape-rendering="crispEdges" stroke-dasharray="9 2.5 1.5 2.5"/>
<line x1="556.0" y1="360.0" x2="561.6" y2="438.0" stroke="#111" stroke-width="1" shape-rendering="crispEdges" stroke-dasharray="9 2.5 1.5 2.5"/>
<line x1="424.0" y1="422.0" x2="426.2" y2="437.5" stroke="#111" stroke-width="1" shape-rendering="crispEdges" />
<line x1="426.2" y1="437.5" x2="440.3" y2="658.0" stroke="#111" stroke-width="1" shape-rendering="crispEdges" stroke-dasharray="9 2.5 1.5 2.5"/>
<polygon points="168.9,310.3 186.9,318.1 169.7,327.5" fill="#000" stroke="none" stroke-width="1" />
<polygon points="423.0,406.2 441.2,413.8 423.8,422.0" fill="#000" stroke="none" stroke-width="1" />
<polygon points="441.0,662.0 458.6,670.6 442.2,680.4" fill="#000" stroke="none" stroke-width="1" />
<circle cx="224.7" cy="372" r="9.8" fill="none" stroke="#000" stroke-width="1.1"/>
<circle cx="555.6" cy="349.4" r="9.8" fill="none" stroke="#000" stroke-width="1.1"/>
<circle cx="736.3" cy="338.5" r="9.8" fill="none" stroke="#000" stroke-width="1.1"/>
<polyline points="0.0,637.0 679.6,838.0 793.5,789.0" fill="none" stroke="#7aa326" stroke-width="3.3" shape-rendering="crispEdges" />
<polyline points="0.0,637.0 679.6,838.0 793.5,789.0" fill="none" stroke="#a6c64e" stroke-width="1.0" shape-rendering="crispEdges" />
<polyline points="0.0,946.5 121.0,876.0 271.0,940.0" fill="none" stroke="#7aa326" stroke-width="3.3" shape-rendering="crispEdges" />
<polyline points="0.0,946.5 121.0,876.0 271.0,940.0" fill="none" stroke="#a6c64e" stroke-width="1.0" shape-rendering="crispEdges" />
<line x1="0.0" y1="886.4" x2="121.0" y2="875.6" stroke="#e020b0" stroke-width="1.6" shape-rendering="crispEdges" />
<line x1="121.0" y1="875.6" x2="793.5" y2="831.0" stroke="#e020b0" stroke-width="3.2" shape-rendering="crispEdges" />
<polyline points="661.9,568.9 679.6,838.0" fill="none" stroke="#e020b0" stroke-width="3.9" shape-rendering="crispEdges" />
<polyline points="661.9,568.9 679.6,838.0" fill="none" stroke="#fbe4f6" stroke-width="1.2" shape-rendering="crispEdges" />
<polyline points="121.0,876.0 126.0,951.0" fill="none" stroke="#e020b0" stroke-width="3.9" shape-rendering="crispEdges" />
<polyline points="121.0,876.0 126.0,951.0" fill="none" stroke="#fbe4f6" stroke-width="1.2" shape-rendering="crispEdges" />
<line x1="635.2" y1="595.5" x2="793.5" y2="624.7" stroke="#25b125" stroke-width="2.6" shape-rendering="crispEdges" />
<line x1="0.0" y1="933.3" x2="793.5" y2="879.7" stroke="#111" stroke-width="1" shape-rendering="crispEdges" />
<line x1="282.5" y1="939.7" x2="793.5" y2="905.5" stroke="#c4c4c4" stroke-width="1" shape-rendering="crispEdges" />
<line x1="271.7" y1="940.6" x2="300.5" y2="938.7" stroke="#111" stroke-width="1" shape-rendering="crispEdges" />
<line x1="259.7" y1="963.8" x2="793.5" y2="928.3" stroke="#111" stroke-width="1" shape-rendering="crispEdges" stroke-dasharray="13 3"/>
<line x1="282.5" y1="939.7" x2="288.1" y2="1024.0" stroke="#c4c4c4" stroke-width="1" shape-rendering="crispEdges" />
<line x1="424.3" y1="930.4" x2="430.5" y2="1024.0" stroke="#c4c4c4" stroke-width="1" shape-rendering="crispEdges" />
<line x1="623.2" y1="917.2" x2="630.2" y2="1024.0" stroke="#c4c4c4" stroke-width="1" shape-rendering="crispEdges" />
<line x1="764.4" y1="907.5" x2="772.1" y2="1024.0" stroke="#c4c4c4" stroke-width="1" shape-rendering="crispEdges" />
<line x1="787.8" y1="906.0" x2="795.6" y2="1024.0" stroke="#c4c4c4" stroke-width="1" shape-rendering="crispEdges" />
<line x1="566.0" y1="943.6" x2="571.3" y2="1024.0" stroke="#c4c4c4" stroke-width="1" shape-rendering="crispEdges" />
<line x1="84.8" y1="612.5" x2="85.6" y2="625.5" stroke="#111" stroke-width="1" shape-rendering="crispEdges" />
<line x1="82.6" y1="621.4" x2="87.8" y2="616.2" stroke="#111" stroke-width="1" shape-rendering="crispEdges" />
<line x1="279.7" y1="600.0" x2="280.5" y2="613.0" stroke="#111" stroke-width="1" shape-rendering="crispEdges" />
<line x1="277.5" y1="608.9" x2="282.7" y2="603.7" stroke="#111" stroke-width="1" shape-rendering="crispEdges" />
<line x1="292.9" y1="599.1" x2="293.7" y2="612.1" stroke="#111" stroke-width="1" shape-rendering="crispEdges" />
<line x1="290.7" y1="608.0" x2="295.9" y2="602.8" stroke="#111" stroke-width="1" shape-rendering="crispEdges" />
<line x1="305.8" y1="598.3" x2="306.6" y2="611.3" stroke="#111" stroke-width="1" shape-rendering="crispEdges" />
<line x1="303.6" y1="607.2" x2="308.8" y2="602.0" stroke="#111" stroke-width="1" shape-rendering="crispEdges" />
<line x1="436.8" y1="589.8" x2="437.6" y2="602.8" stroke="#111" stroke-width="1" shape-rendering="crispEdges" />
<line x1="434.6" y1="598.7" x2="439.8" y2="593.5" stroke="#111" stroke-width="1" shape-rendering="crispEdges" />
<line x1="564.2" y1="581.6" x2="565.0" y2="594.6" stroke="#111" stroke-width="1" shape-rendering="crispEdges" />
<line x1="562.0" y1="590.5" x2="567.2" y2="585.3" stroke="#111" stroke-width="1" shape-rendering="crispEdges" />
<line x1="577.9" y1="580.8" x2="578.7" y2="593.8" stroke="#111" stroke-width="1" shape-rendering="crispEdges" />
<line x1="575.7" y1="589.7" x2="580.9" y2="584.5" stroke="#111" stroke-width="1" shape-rendering="crispEdges" />
<line x1="83.3" y1="603.9" x2="83.9" y2="611.9" stroke="#111" stroke-width="1" shape-rendering="crispEdges" />
<line x1="81.0" y1="610.3" x2="86.2" y2="605.1" stroke="#111" stroke-width="1" shape-rendering="crispEdges" />
<line x1="277.3" y1="590.0" x2="277.9" y2="598.0" stroke="#111" stroke-width="1" shape-rendering="crispEdges" />
<line x1="275.0" y1="596.4" x2="280.2" y2="591.2" stroke="#111" stroke-width="1" shape-rendering="crispEdges" />
<line x1="105.6" y1="919.6" x2="106.4" y2="932.6" stroke="#111" stroke-width="1" shape-rendering="crispEdges" />
<line x1="103.4" y1="928.5" x2="108.6" y2="923.3" stroke="#111" stroke-width="1" shape-rendering="crispEdges" />
<line x1="255.1" y1="909.6" x2="255.9" y2="922.6" stroke="#111" stroke-width="1" shape-rendering="crispEdges" />
<line x1="252.9" y1="918.5" x2="258.1" y2="913.3" stroke="#111" stroke-width="1" shape-rendering="crispEdges" />
<line x1="268.1" y1="908.7" x2="268.9" y2="921.7" stroke="#111" stroke-width="1" shape-rendering="crispEdges" />
<line x1="265.9" y1="917.6" x2="271.1" y2="912.4" stroke="#111" stroke-width="1" shape-rendering="crispEdges" />
<line x1="299.9" y1="906.5" x2="300.7" y2="919.5" stroke="#111" stroke-width="1" shape-rendering="crispEdges" />
<line x1="297.7" y1="915.4" x2="302.9" y2="910.2" stroke="#111" stroke-width="1" shape-rendering="crispEdges" />
<line x1="585.5" y1="887.3" x2="586.3" y2="900.3" stroke="#111" stroke-width="1" shape-rendering="crispEdges" />
<line x1="583.3" y1="896.2" x2="588.5" y2="891.0" stroke="#111" stroke-width="1" shape-rendering="crispEdges" />
<line x1="599.2" y1="886.3" x2="600.0" y2="899.3" stroke="#111" stroke-width="1" shape-rendering="crispEdges" />
<line x1="597.0" y1="895.2" x2="602.2" y2="890.0" stroke="#111" stroke-width="1" shape-rendering="crispEdges" />
<line x1="765.1" y1="875.1" x2="765.9" y2="888.1" stroke="#111" stroke-width="1" shape-rendering="crispEdges" />
<line x1="762.9" y1="884.0" x2="768.1" y2="878.8" stroke="#111" stroke-width="1" shape-rendering="crispEdges" />
<line x1="781.6" y1="874.0" x2="782.4" y2="887.0" stroke="#111" stroke-width="1" shape-rendering="crispEdges" />
<line x1="779.4" y1="882.9" x2="784.6" y2="877.7" stroke="#111" stroke-width="1" shape-rendering="crispEdges" />
<line x1="704.8" y1="448.1" x2="715.8" y2="448.1" stroke="#111" stroke-width="1" shape-rendering="crispEdges" />
<line x1="707.7" y1="450.8" x2="712.9" y2="445.6" stroke="#111" stroke-width="1" shape-rendering="crispEdges" />
<line x1="711.3" y1="549.2" x2="722.3" y2="549.2" stroke="#111" stroke-width="1" shape-rendering="crispEdges" />
<line x1="714.2" y1="551.9" x2="719.4" y2="546.7" stroke="#111" stroke-width="1" shape-rendering="crispEdges" />
<line x1="712.2" y1="562.2" x2="723.2" y2="562.2" stroke="#111" stroke-width="1" shape-rendering="crispEdges" />
<line x1="715.1" y1="564.9" x2="720.3" y2="559.7" stroke="#111" stroke-width="1" shape-rendering="crispEdges" />
<line x1="737.0" y1="931.2" x2="748.0" y2="931.2" stroke="#111" stroke-width="1" shape-rendering="crispEdges" />
<line x1="739.9" y1="933.9" x2="745.1" y2="928.7" stroke="#111" stroke-width="1" shape-rendering="crispEdges" />
<line x1="739.3" y1="965.2" x2="750.3" y2="965.2" stroke="#111" stroke-width="1" shape-rendering="crispEdges" />
<line x1="742.2" y1="967.9" x2="747.4" y2="962.7" stroke="#111" stroke-width="1" shape-rendering="crispEdges" />
<line x1="103.6" y1="950.8" x2="109.6" y2="950.8" stroke="#111" stroke-width="1" shape-rendering="crispEdges" />
<line x1="104.0" y1="953.4" x2="109.2" y2="948.2" stroke="#111" stroke-width="1" shape-rendering="crispEdges" />
<line x1="104.8" y1="966.3" x2="110.8" y2="966.3" stroke="#111" stroke-width="1" shape-rendering="crispEdges" />
<line x1="105.2" y1="968.9" x2="110.4" y2="963.7" stroke="#111" stroke-width="1" shape-rendering="crispEdges" />
<line x1="565.0" y1="920.8" x2="587.2" y2="919.3" stroke="#111" stroke-width="1" shape-rendering="crispEdges" stroke-dasharray="9 3"/>
<line x1="601.8" y1="918.3" x2="622.5" y2="917.0" stroke="#111" stroke-width="1" shape-rendering="crispEdges" stroke-dasharray="9 3"/>
<text transform="translate(170.0,248.6) rotate(88.3) scale(1,1)" font-size="9.8" fill="#000" text-anchor="start" font-weight="normal"  stroke="#000" stroke-width="0.12">S-Tiefgarage</text>
<text transform="translate(421.5,319.0) rotate(86.3) scale(1,1)" font-size="9.9" fill="#000" text-anchor="start" font-weight="normal"  stroke="#000" stroke-width="0.12">S-Block 3 Bel UG2</text>
<text transform="translate(447.3,685.0) rotate(86.8) scale(1,1)" font-size="9.7" fill="#000" text-anchor="start" font-weight="normal"  stroke="#000" stroke-width="0.12">S-Block 3 Bel UG2</text>
<text transform="translate(219.9,372.0) rotate(90) scale(1,1)" font-size="13.5" fill="#000" text-anchor="middle" font-weight="normal"  stroke="#000" stroke-width="0.12">9b</text>
<text transform="translate(550.8,349.4) rotate(90) scale(1,1)" font-size="13.5" fill="#000" text-anchor="middle" font-weight="normal"  stroke="#000" stroke-width="0.12">9c</text>
<text transform="translate(731.5,338.5) rotate(90) scale(1,1)" font-size="13.5" fill="#000" text-anchor="middle" font-weight="normal"  stroke="#000" stroke-width="0.12">9d</text>
<text transform="translate(33.3,430.0) rotate(86.5) scale(0.7,1)" font-size="15.8" fill="#1d1db4" text-anchor="middle" font-weight="normal" stroke="#1d1db4" stroke-width="0.2">151</text>
<text transform="translate(100.7,426.3) rotate(86.5) scale(0.7,1)" font-size="15.8" fill="#1d1db4" text-anchor="middle" font-weight="normal" stroke="#1d1db4" stroke-width="0.2">150</text>
<text transform="translate(168.0,422.7) rotate(86.5) scale(0.7,1)" font-size="15.8" fill="#1d1db4" text-anchor="middle" font-weight="normal" stroke="#1d1db4" stroke-width="0.2">149</text>
<text transform="translate(235.4,419.0) rotate(86.5) scale(0.7,1)" font-size="15.8" fill="#1d1db4" text-anchor="middle" font-weight="normal" stroke="#1d1db4" stroke-width="0.2">148</text>
<text transform="translate(303.5,412.6) rotate(86.5) scale(0.7,1)" font-size="15.8" fill="#1d1db4" text-anchor="middle" font-weight="normal" stroke="#1d1db4" stroke-width="0.2">147</text>
<text transform="translate(387.9,410.8) rotate(86.5) scale(0.7,1)" font-size="15.8" fill="#1d1db4" text-anchor="middle" font-weight="normal" stroke="#1d1db4" stroke-width="0.2">146</text>
<text transform="translate(472.1,406.2) rotate(86.5) scale(0.7,1)" font-size="15.8" fill="#1d1db4" text-anchor="middle" font-weight="normal" stroke="#1d1db4" stroke-width="0.2">145</text>
<text transform="translate(556.4,401.6) rotate(86.5) scale(0.7,1)" font-size="15.8" fill="#1d1db4" text-anchor="middle" font-weight="normal" stroke="#1d1db4" stroke-width="0.2">144</text>
<text transform="translate(640.9,397.0) rotate(86.5) scale(0.7,1)" font-size="15.8" fill="#1d1db4" text-anchor="middle" font-weight="normal" stroke="#1d1db4" stroke-width="0.2">143</text>
<text transform="translate(725.5,392.4) rotate(86.5) scale(0.7,1)" font-size="15.8" fill="#1d1db4" text-anchor="middle" font-weight="normal" stroke="#1d1db4" stroke-width="0.2">142</text>
<text transform="translate(118.5,436.5) rotate(0) scale(0.95,1)" font-size="7.6" fill="#dca02c" text-anchor="start" font-weight="normal" stroke="#dca02c" stroke-width="0.25">Pfahlrost</text>
<text transform="translate(118.5,445.6) rotate(0) scale(0.95,1)" font-size="7.6" fill="#dca02c" text-anchor="start" font-weight="normal" stroke="#dca02c" stroke-width="0.25">0,6/20 dl. m</text>
<text transform="translate(118.5,454.7) rotate(0) scale(0.95,1)" font-size="7.6" fill="#dca02c" text-anchor="start" font-weight="normal" stroke="#dca02c" stroke-width="0.25">OK= -0.79</text>
<text transform="translate(118.5,463.8) rotate(0) scale(0.95,1)" font-size="7.6" fill="#dca02c" text-anchor="start" font-weight="normal" stroke="#dca02c" stroke-width="0.25">UK= -1.20</text>
<text transform="translate(155.6,436.5) rotate(0) scale(0.95,1)" font-size="7.6" fill="#dca02c" text-anchor="start" font-weight="normal" stroke="#dca02c" stroke-width="0.25">OK= 317.71 üA</text>
<text transform="translate(155.6,445.6) rotate(0) scale(0.95,1)" font-size="7.6" fill="#dca02c" text-anchor="start" font-weight="normal" stroke="#dca02c" stroke-width="0.25">UK= 317.29 üA</text>
<text transform="translate(11.8,386.0) rotate(124.8) scale(0.84,1)" y="4.2" font-size="11.6" fill="#58d458" text-anchor="middle">311.13</text>
<text transform="translate(28.1,389.3) rotate(123) scale(0.88,1)" y="4.5" font-size="12.6" fill="#8c8c8c" text-anchor="middle">20</text>
<text transform="translate(11.5,433.2) rotate(124.5) scale(0.84,1)" y="4.2" font-size="11.6" fill="#58d458" text-anchor="middle">311.10</text>
<text transform="translate(23.9,441.0) rotate(124) scale(0.88,1)" y="4.5" font-size="12.6" fill="#8c8c8c" text-anchor="middle">155</text>
<text transform="translate(313.6,408.8) rotate(127.8) scale(0.84,1)" y="4.2" font-size="11.6" fill="#58d458" text-anchor="middle">311.13</text>
<text transform="translate(327.5,417.0) rotate(128) scale(0.88,1)" y="4.5" font-size="12.6" fill="#8c8c8c" text-anchor="middle">153</text>
<text transform="translate(304.7,491.0) rotate(127) scale(0.84,1)" y="4.2" font-size="11.6" fill="#58d458" text-anchor="middle">311.13</text>
<text transform="translate(319.3,498.3) rotate(125) scale(0.88,1)" y="4.5" font-size="12.6" fill="#8c8c8c" text-anchor="middle">154</text>
<text transform="translate(619.2,393.0) rotate(125.6) scale(0.84,1)" y="4.2" font-size="11.6" fill="#58d458" text-anchor="middle">311.11</text>
<text transform="translate(632.9,400.5) rotate(126) scale(0.88,1)" y="4.5" font-size="12.6" fill="#8c8c8c" text-anchor="middle">151</text>
<text transform="translate(609.3,476.9) rotate(124) scale(0.84,1)" y="4.2" font-size="11.6" fill="#58d458" text-anchor="middle">311.11</text>
<text transform="translate(623.0,484.4) rotate(128) scale(0.88,1)" y="4.5" font-size="12.6" fill="#8c8c8c" text-anchor="middle">152</text>
<text transform="translate(784.5,330.6) rotate(124) scale(0.84,1)" y="4.2" font-size="11.6" fill="#58d458" text-anchor="middle">311.58</text>
<text transform="translate(-3.4,510.0) rotate(127) scale(0.84,1)" y="4.2" font-size="11.6" fill="#58d458" text-anchor="middle">311.10</text>
<text transform="translate(14.0,520.0) rotate(127) scale(0.88,1)" y="4.5" font-size="12.6" fill="#8c8c8c" text-anchor="middle">156</text>
<circle cx="15.1" cy="407.2" r="2.6" fill="none" stroke="#58d458" stroke-width="1"/>
<circle cx="8.3" cy="454.2" r="2.6" fill="none" stroke="#58d458" stroke-width="1"/>
<circle cx="25" cy="487.5" r="2.6" fill="none" stroke="#58d458" stroke-width="1"/>
<circle cx="788" cy="358.8" r="2.6" fill="none" stroke="#58d458" stroke-width="1"/>
<path d="M310.8 435.8L314.2 432.40000000000003L317.59999999999997 435.8L314.2 439.2Z" fill="none" stroke="#58d458" stroke-width="1"/>
<path d="M313.3 471.3L316.7 467.90000000000003L320.09999999999997 471.3L316.7 474.7Z" fill="none" stroke="#58d458" stroke-width="1"/>
<path d="M615.0 418.8L618.4 415.40000000000003L621.8 418.8L618.4 422.2Z" fill="none" stroke="#58d458" stroke-width="1"/>
<path d="M618.5 453.3L621.9 449.90000000000003L625.3 453.3L621.9 456.7Z" fill="none" stroke="#58d458" stroke-width="1"/>
<text transform="translate(588.9,393.9) rotate(124.5) scale(0.8,1)" y="4.8" font-size="13.4" fill="#111" text-anchor="middle" stroke="#000" stroke-width="0.2">19584</text>
<circle cx="591" cy="418.8" r="3.4" fill="none" stroke="#111" stroke-width="0.9"/>
<line x1="583.5" y1="402.0" x2="589.5" y2="416.0" stroke="#555" stroke-width="0.8" shape-rendering="crispEdges" />
<line x1="591.0" y1="422.0" x2="593.2" y2="455.0" stroke="#111" stroke-width="1" shape-rendering="crispEdges" stroke-dasharray="5 2"/>
<line x1="618.6" y1="421.0" x2="620.6" y2="453.0" stroke="#111" stroke-width="1" shape-rendering="crispEdges" stroke-dasharray="5 2"/>
<text transform="translate(417.0,505.5) rotate(-3.5) scale(1,1)" font-size="5.6" fill="#000" text-anchor="start" font-weight="normal"  stroke="#000" stroke-width="0.22">TG-UG2-05</text>
<text transform="translate(417.0,517.0) rotate(-3.5) scale(1,1)" font-size="8.2" fill="#000" text-anchor="start" font-weight="normal"  stroke="#000" stroke-width="0.22">Belüftung UG2</text>
<text transform="translate(417.0,525.5) rotate(-3.5) scale(1,1)" font-size="5.6" fill="#000" text-anchor="start" font-weight="normal"  stroke="#000" stroke-width="0.22">3,43 m²</text>
<text transform="translate(653.3,492.5) rotate(-3.5) scale(1,1)" font-size="5.6" fill="#000" text-anchor="start" font-weight="normal"  stroke="#000" stroke-width="0.22">TG-UG2-04</text>
<text transform="translate(653.3,503.5) rotate(-3.5) scale(1,1)" font-size="8.2" fill="#000" text-anchor="start" font-weight="normal"  stroke="#000" stroke-width="0.22">Belüftung UG2</text>
<text transform="translate(653.3,512.0) rotate(-3.5) scale(1,1)" font-size="5.6" fill="#000" text-anchor="start" font-weight="normal"  stroke="#000" stroke-width="0.22">3,30 m²</text>
<text transform="translate(231.0,500.0) rotate(-3.5) scale(1,1)" font-size="5.6" fill="#000" text-anchor="start" font-weight="normal"  stroke="#000" stroke-width="0.22">TG-UG2-06</text>
<text transform="translate(230.5,511.3) rotate(-3.5) scale(1,1)" font-size="8.2" fill="#000" text-anchor="start" font-weight="normal"  stroke="#000" stroke-width="0.22">Belüftung UG2</text>
<text transform="translate(234.0,519.5) rotate(-3.5) scale(1,1)" font-size="5.6" fill="#000" text-anchor="start" font-weight="normal"  stroke="#000" stroke-width="0.22">4,49 m²</text>
<text transform="translate(248.0,484.2) rotate(176.5) scale(1,1)" font-size="11" fill="#3fd03f" text-anchor="start" font-weight="normal" stroke="#3fd03f" stroke-width="0.3">Oberkante Unterkante</text>
<text transform="translate(75.0,508.6) rotate(-3.5) scale(0.86,1)" font-size="6.0" fill="#000" text-anchor="start" font-weight="bold"  stroke="#000" stroke-width="0.22">Unterkante Deckensprung</text>
<text transform="translate(-6.0,514.5) rotate(-3.5) scale(0.9,1)" font-size="8" fill="#000" text-anchor="start" font-weight="bold"  stroke="#000" stroke-width="0.22">Sohle</text>
<text transform="translate(133.8,600.3) rotate(-4) scale(1,1)" font-size="7.4" fill="#000" text-anchor="start" font-weight="normal"  stroke="#000" stroke-width="0.22">MOK 2.30m</text>
<text transform="translate(130.3,614.2) rotate(-4) scale(1,1)" font-size="7.4" fill="#000" text-anchor="start" font-weight="normal"  stroke="#000" stroke-width="0.22">U225 cm ≥ 179 cm</text>
<line x1="130.3" y1="615.6" x2="185.4" y2="611.8" stroke="#111" stroke-width="0.9" shape-rendering="crispEdges" />
<text transform="translate(133.0,625.3) rotate(-4) scale(1,1)" font-size="7.0" fill="#000" text-anchor="start" font-weight="normal"  stroke="#000" stroke-width="0.22">Oberkante 1.00</text>
<text transform="translate(132.0,634.4) rotate(-4) scale(1,1)" font-size="7.0" fill="#000" text-anchor="start" font-weight="normal"  stroke="#000" stroke-width="0.22">Unterkante 0.79</text>
<text transform="translate(63.0,621.8) rotate(176.2) scale(1,1)" font-size="6.8" fill="#000" text-anchor="start" font-weight="normal"  stroke="#000" stroke-width="0.22">555</text>
<text transform="translate(84.2,596.5) rotate(86.5) scale(1,1)" font-size="6.8" fill="#000" text-anchor="start" font-weight="normal"  stroke="#000" stroke-width="0.22">25</text>
<text transform="translate(280.2,585.0) rotate(86.5) scale(1,1)" font-size="6.8" fill="#000" text-anchor="start" font-weight="normal"  stroke="#000" stroke-width="0.22">25</text>
<text transform="translate(310.0,606.5) rotate(176.2) scale(1,1)" font-size="6.8" fill="#000" text-anchor="start" font-weight="normal"  stroke="#000" stroke-width="0.22">25</text>
<text transform="translate(441.0,599.5) rotate(176.2) scale(1,1)" font-size="6.5" fill="#000" text-anchor="start" font-weight="normal"  stroke="#000" stroke-width="0.22">455</text>
<text transform="translate(570.0,593.0) rotate(86.5) scale(1,1)" font-size="6" fill="#000" text-anchor="start" font-weight="normal"  stroke="#000" stroke-width="0.22">25</text>
<text transform="translate(713.5,581.5) rotate(176.2) scale(1,1)" font-size="6.5" fill="#000" text-anchor="start" font-weight="normal"  stroke="#000" stroke-width="0.22">454</text>
<text transform="translate(718.8,553.5) rotate(86.5) scale(1,1)" font-size="6.5" fill="#000" text-anchor="start" font-weight="normal"  stroke="#000" stroke-width="0.22">15</text>
<text transform="translate(716.2,494.5) rotate(86.5) scale(1,1)" font-size="6.5" fill="#000" text-anchor="start" font-weight="normal"  stroke="#000" stroke-width="0.22">180</text>
<text transform="translate(97.0,772.0) rotate(86.5) scale(1,1)" font-size="6.5" fill="#000" text-anchor="start" font-weight="normal"  stroke="#000" stroke-width="0.22">808</text>
<text transform="translate(290.5,760.0) rotate(86.5) scale(1,1)" font-size="6.5" fill="#000" text-anchor="start" font-weight="normal"  stroke="#000" stroke-width="0.22">808</text>
<text transform="translate(732.5,740.0) rotate(86.5) scale(1,1)" font-size="6.5" fill="#000" text-anchor="start" font-weight="normal"  stroke="#000" stroke-width="0.22">869</text>
<text transform="translate(744.8,944.0) rotate(86.5) scale(1,1)" font-size="6.5" fill="#000" text-anchor="start" font-weight="normal"  stroke="#000" stroke-width="0.22">60</text>
<text transform="translate(434.0,907.5) rotate(176.2) scale(1,1)" font-size="6.5" fill="#000" text-anchor="start" font-weight="normal"  stroke="#000" stroke-width="0.22">252</text>
<text transform="translate(596.0,895.0) rotate(176.2) scale(1,1)" font-size="6.2" fill="#000" text-anchor="start" font-weight="normal"  stroke="#000" stroke-width="0.22">25</text>
<text transform="translate(778.0,884.0) rotate(176.2) scale(1,1)" font-size="6.2" fill="#000" text-anchor="start" font-weight="normal"  stroke="#000" stroke-width="0.22">30</text>
<text transform="translate(266.0,918.3) rotate(176.2) scale(1,1)" font-size="6.2" fill="#000" text-anchor="start" font-weight="normal"  stroke="#000" stroke-width="0.22">25</text>
<text transform="translate(689.5,888.6) rotate(176.2) scale(1,1)" font-size="6.2" fill="#000" text-anchor="start" font-weight="normal"  stroke="#000" stroke-width="0.22">2925</text>
<text transform="translate(118.3,932.6) rotate(-3.5) scale(1,1)" font-size="6.8" fill="#000" text-anchor="start" font-weight="normal"  stroke="#000" stroke-width="0.22">025</text>
<text transform="translate(108.7,955.5) rotate(86.5) scale(1,1)" font-size="6.4" fill="#000" text-anchor="start" font-weight="normal"  stroke="#000" stroke-width="0.22">25</text>
<text transform="translate(609.0,581.5) rotate(90) scale(0.9,1)" font-size="8.8" fill="#2c9c2c" text-anchor="start" font-weight="normal" stroke="#2c9c2c" stroke-width="0.3">39.62 m</text>
<text transform="translate(469.7,921.8) rotate(-3.7) scale(0.94,1)" font-size="7.2" fill="#000" text-anchor="start" font-weight="normal"  stroke="#000" stroke-width="0.22">Unterkante 0.79 Deckensprung</text>
<text transform="translate(469.7,937.0) rotate(-3.7) scale(0.94,1)" font-size="7.2" fill="#000" text-anchor="start" font-weight="normal"  stroke="#000" stroke-width="0.22">Unterkante 0.99 Deckensprung</text>
<text transform="translate(306.5,943.5) rotate(176.3) scale(0.78,1)" font-size="23.5" fill="#c2c2c2" text-anchor="start" font-weight="normal" stroke="#c2c2c2" stroke-width="0.7">65</text>
<text transform="translate(447.5,935.0) rotate(176.3) scale(0.78,1)" font-size="23.5" fill="#c2c2c2" text-anchor="start" font-weight="normal" stroke="#c2c2c2" stroke-width="0.7">64</text>
<text transform="translate(645.5,920.5) rotate(176.3) scale(0.78,1)" font-size="23.5" fill="#c2c2c2" text-anchor="start" font-weight="normal" stroke="#c2c2c2" stroke-width="0.7">63</text>
<text transform="translate(812.0,910.0) rotate(176.3) scale(0.78,1)" font-size="23.5" fill="#c2c2c2" text-anchor="start" font-weight="normal" stroke="#c2c2c2" stroke-width="0.7">62</text>
<text transform="translate(147.0,840.5) rotate(-86.5) scale(1,1)" font-size="14.6" fill="#2464b4" text-anchor="start" font-weight="normal" >2,46 %</text>
<line x1="150.8" y1="839.6" x2="142.5" y2="723.0" stroke="#2464b4" stroke-width="1" shape-rendering="crispEdges" />
<polygon points="142.0,708.5 136.2,723.0 148.8,723.0" fill="none" stroke="#2464b4" stroke-width="1" />
<text transform="translate(506.8,700.4) rotate(-3.5) scale(1,1)" font-size="15" fill="#2464b4" text-anchor="start" font-weight="normal" >1 %</text>
<line x1="531.6" y1="701.4" x2="463.0" y2="706.5" stroke="#2464b4" stroke-width="1" shape-rendering="crispEdges" />
<polygon points="451.6,705.9 461.1,700.8 462.8,711.6" fill="none" stroke="#2464b4" stroke-width="1" />
<text transform="translate(747.0,679.5) rotate(-3.5) scale(1,1)" font-size="15" fill="#2464b4" text-anchor="start" font-weight="normal" >1 %</text>
<line x1="747.0" y1="682.3" x2="794.0" y2="679.3" stroke="#2464b4" stroke-width="1" shape-rendering="crispEdges" />
<text transform="translate(91.5,932.0) rotate(-3.5) scale(1,1)" font-size="15" fill="#2464b4" text-anchor="start" font-weight="normal" >1 %</text>
<line x1="73.2" y1="937.2" x2="116.4" y2="934.2" stroke="#2464b4" stroke-width="1" shape-rendering="crispEdges" />
<polygon points="59.6,938.2 73.0,931.7 73.6,942.6" fill="none" stroke="#2464b4" stroke-width="1" />
<text transform="translate(134.3,929.0) rotate(-3.5) scale(1,1)" font-size="15" fill="#2464b4" text-anchor="start" font-weight="normal" >1 %</text>
<line x1="134.7" y1="933.4" x2="177.9" y2="930.4" stroke="#2464b4" stroke-width="1" shape-rendering="crispEdges" />
<polygon points="191.5,929.6 177.7,924.6 178.3,935.4" fill="none" stroke="#2464b4" stroke-width="1" />
<text transform="translate(115.3,837.0) rotate(86.5) scale(0.8,1)" font-size="15.5" fill="#b84a4a" text-anchor="start" font-weight="normal" >-3,34</text>
<text transform="translate(274.3,904.0) rotate(86.5) scale(0.8,1)" font-size="15.5" fill="#b84a4a" text-anchor="start" font-weight="normal" >-3,38</text>
<text transform="translate(674.3,850.0) rotate(86.5) scale(0.8,1)" font-size="15.5" fill="#b84a4a" text-anchor="start" font-weight="normal" >-3,34</text>
<text transform="translate(656.3,582.0) rotate(86.5) scale(0.8,1)" font-size="15.5" fill="#b84a4a" text-anchor="start" font-weight="normal" >-3,34</text>
<text transform="translate(131.3,943.5) rotate(86.5) scale(0.8,1)" font-size="15.5" fill="#b84a4a" text-anchor="start" font-weight="normal" opacity="0.55">-3,34</text>
<circle cx="271.7" cy="940.3" r="2.8" fill="none" stroke="#b84a4a" stroke-width="0.9"/>
<line x1="266.5" y1="940.6" x2="277.0" y2="940.0" stroke="#b84a4a" stroke-width="0.9" shape-rendering="crispEdges" />
<line x1="271.4" y1="935.0" x2="272.0" y2="945.6" stroke="#b84a4a" stroke-width="0.9" shape-rendering="crispEdges" />
<circle cx="126" cy="951" r="2.5" fill="none" stroke="#b84a4a" stroke-width="0.9"/>
<circle cx="120.4" cy="976.8" r="3.3" fill="none" stroke="#2a6cc8" stroke-width="1"/>
<text transform="translate(116.6,988.0) rotate(86.5) scale(0.9,1)" font-size="8.2" fill="#000" text-anchor="start" font-weight="bold"  stroke="#000" stroke-width="0.22">RWE RH19</text>
<line x1="120.8" y1="870.0" x2="121.4" y2="881.0" stroke="#b84a4a" stroke-width="1" shape-rendering="crispEdges" />
<line x1="679.8" y1="832.0" x2="680.4" y2="843.0" stroke="#b84a4a" stroke-width="1" shape-rendering="crispEdges" />
</g>
</svg>
</body></html>
